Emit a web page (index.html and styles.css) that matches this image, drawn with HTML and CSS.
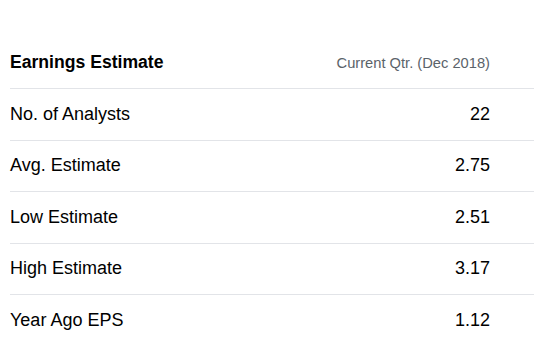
FILE: index.html
```html
<!DOCTYPE html>
<html>
<head>
<meta charset="utf-8">
<link rel="stylesheet" href="styles.css">
</head>
<body>
<div class="table">
  <div class="row head">
    <span class="label">Earnings Estimate</span>
    <span class="value">Current Qtr. (Dec 2018)</span>
  </div>
  <div class="row"><span class="label">No. of Analysts</span><span class="value">22</span></div>
  <div class="row"><span class="label">Avg. Estimate</span><span class="value">2.75</span></div>
  <div class="row"><span class="label">Low Estimate</span><span class="value">2.51</span></div>
  <div class="row"><span class="label">High Estimate</span><span class="value">3.17</span></div>
  <div class="row"><span class="label">Year Ago EPS</span><span class="value">1.12</span></div>
</div>
</body>
</html>
```
FILE: styles.css
```css
html, body {
  margin: 0;
  padding: 0;
  background: #fff;
}
body {
  font-family: "Liberation Sans", Arial, sans-serif;
  color: #000;
}
.table {
  margin: 37.5px 10px 0 10px;
  width: 524px;
}
.row {
  display: flex;
  align-items: center;
  justify-content: space-between;
  height: 50.5px;
  border-bottom: 1px solid #e2e4e8;
  font-size: 18px;
}
.row .value {
  padding-right: 44px;
}
.head .label {
  font-weight: bold;
  font-size: 17.6px;
}
.head .value {
  font-size: 14.7px;
  color: #5b636a;
}
```
